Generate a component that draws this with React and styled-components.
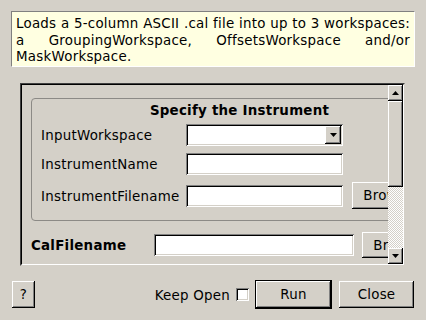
import React from 'react';
import styled, { createGlobalStyle, css } from 'styled-components';

const BG = '#d4d0c8';

const GlobalStyle = createGlobalStyle`
  html, body {
    margin: 0;
    padding: 0;
    background: ${BG};
  }
  body {
    font-family: "DejaVu Sans", "Liberation Sans", sans-serif;
    font-size: 13.4px;
    letter-spacing: 0.25px;
    color: #000;
  }
  * { box-sizing: border-box; }
`;

const raised = css`
  box-shadow: inset -1px -1px #000, inset 1px 1px #fff,
    inset -2px -2px #808080, inset 2px 2px ${BG};
`;

const sunken = css`
  box-shadow: inset 1px 1px #808080, inset -1px -1px #fff,
    inset 2px 2px #000, inset -2px -2px ${BG};
`;

const Page = styled.div`
  width: 426px;
  height: 320px;
  display: flex;
  flex-direction: column;
  overflow: hidden;
`;

const Description = styled.div`
  margin: 11px 11px 0 11px;
  height: 56px;
  padding: 4px 4px 0 4px;
  background: #ffffe1;
  border: 1px solid;
  border-color: #808080 #fff #fff #808080;
  line-height: 16.5px;
  text-align: justify;
`;

const Frame = styled.div`
  margin: 16px 0 0 20px;
  width: 385px;
  height: 183px;
  border: 1px solid;
  border-color: #404040 ${BG} ${BG} #404040;
`;

const FrameInner = styled.div`
  height: 100%;
  display: flex;
  border: 1px solid;
  border-color: #000 #fff #fff #000;
`;

const Viewport = styled.div`
  flex: 1;
  min-width: 0;
  overflow: hidden;
`;

const Content = styled.div`
  width: max-content;
  padding: 13px 0 0 9px;
`;

const GroupBox = styled.div`
  width: 417px;
  border: 1px solid #8c8a86;
  border-radius: 4px;
  padding: 4px 0 11px 9px;
`;

const GroupTitle = styled.div`
  font-weight: bold;
  text-align: center;
  line-height: 16px;
  padding-right: 9px;
`;

const FormGrid = styled.div`
  margin-top: 5px;
  display: grid;
  grid-template-columns: ${(p) => p.$label}px auto auto;
  justify-content: start;
  row-gap: 7px;
  align-items: center;
`;

const Label = styled.div`
  font-weight: ${(p) => (p.$bold ? 'bold' : 'normal')};
  white-space: nowrap;
  line-height: 16px;
  padding-top: 2px;
`;

const Field = styled.div`
  width: ${(p) => p.$w}px;
  height: 22px;
  background: #fff;
  ${sunken};
`;

const Combo = styled.div`
  width: 157px;
  height: 22px;
  background: #fff;
  ${sunken};
  display: flex;
  justify-content: flex-end;
  padding: 2px;
`;

const ArrowButton = styled.div`
  width: ${(p) => p.$w}px;
  height: ${(p) => p.$h}px;
  flex: none;
  background: ${BG};
  ${raised};
  display: flex;
  align-items: center;
  justify-content: center;
`;

const Button = styled.div`
  width: ${(p) => p.$w}px;
  height: ${(p) => p.$h}px;
  margin-left: ${(p) => p.$ml || 0}px;
  flex: none;
  background: ${BG};
  ${raised};
  display: flex;
  align-items: center;
  justify-content: center;
  white-space: nowrap;
  line-height: 16px;
  padding-top: 1px;
`;

const DefaultButton = styled.div`
  margin-left: ${(p) => p.$ml || 0}px;
  border: 1px solid #000;
  flex: none;
`;

const CalRow = styled.div`
  margin-top: 11px;
  display: grid;
  grid-template-columns: 123px auto auto;
  justify-content: start;
  align-items: center;
`;

const Scrollbar = styled.div`
  width: 15px;
  flex: none;
  display: flex;
  flex-direction: column;
`;

const Thumb = styled.div`
  height: 86px;
  background: ${BG};
  ${raised};
`;

const Track = styled.div`
  flex: 1;
  background: repeating-conic-gradient(${BG} 0 25%, #fff 0 50%) 0 0 / 2px 2px;
`;

const Footer = styled.div`
  margin-top: 14px;
  padding: 0 12px;
  display: flex;
  align-items: center;
`;

const Spacer = styled.div`
  flex: 1;
`;

const Check = styled.div`
  width: 13px;
  height: 13px;
  margin-left: 6px;
  background: #fff;
  ${sunken};
`;

const Arrow = ({ up }) => (
  <svg width="7" height="4" viewBox="0 0 7 4" style={{ display: 'block' }}>
    <polygon points={up ? '3.5,0 7,4 0,4' : '0,0 7,0 3.5,4'} fill="#000" />
  </svg>
);

export default function App() {
  return (
    <>
      <GlobalStyle />
      <Page>
        <Description>
          Loads a 5-column ASCII .cal file into up to 3 workspaces: a GroupingWorkspace, OffsetsWorkspace and/or MaskWorkspace.
        </Description>
        <Frame>
          <FrameInner>
            <Viewport>
              <Content>
                <GroupBox>
                  <GroupTitle>Specify the Instrument</GroupTitle>
                  <FormGrid $label={145}>
                    <Label>InputWorkspace</Label>
                    <Combo>
                      <ArrowButton $w={16} $h={18}>
                        <Arrow />
                      </ArrowButton>
                    </Combo>
                    <div />
                    <Label>InstrumentName</Label>
                    <Field $w={157} />
                    <div />
                    <Label>InstrumentFilename</Label>
                    <Field $w={157} />
                    <Button $w={73} $h={27} $ml={9}>Browse</Button>
                  </FormGrid>
                </GroupBox>
                <CalRow>
                  <Label $bold>CalFilename</Label>
                  <Field $w={200} />
                  <Button $w={73} $h={26} $ml={8}>Browse</Button>
                </CalRow>
              </Content>
            </Viewport>
            <Scrollbar>
              <ArrowButton $w={15} $h={16}>
                <Arrow up />
              </ArrowButton>
              <Thumb />
              <Track />
              <ArrowButton $w={15} $h={16}>
                <Arrow />
              </ArrowButton>
            </Scrollbar>
          </FrameInner>
        </Frame>
        <Footer>
          <Button $w={23} $h={27}>?</Button>
          <Spacer />
          <Label>Keep Open</Label>
          <Check />
          <DefaultButton $ml={6}>
            <Button $w={75} $h={27}>Run</Button>
          </DefaultButton>
          <Button $w={75} $h={27} $ml={7}>Close</Button>
        </Footer>
      </Page>
    </>
  );
}
